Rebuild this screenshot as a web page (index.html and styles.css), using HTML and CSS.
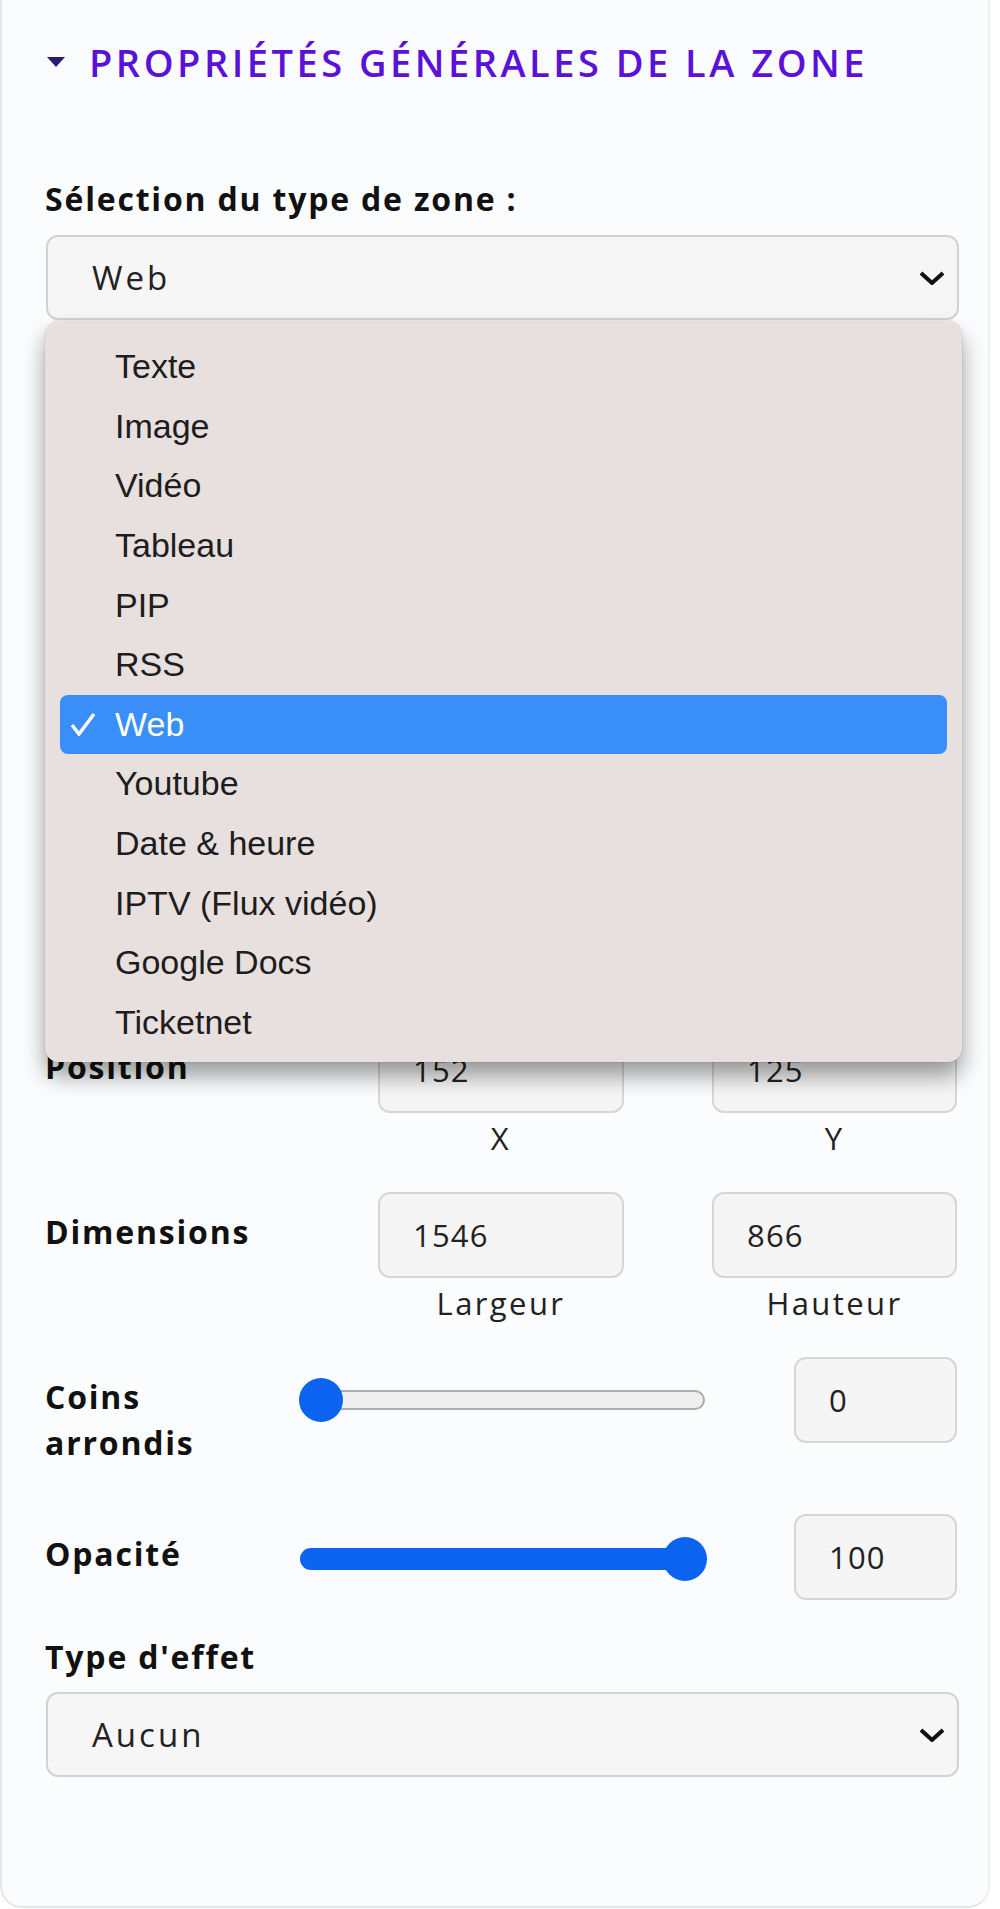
FILE: index.html
```html
<!DOCTYPE html>
<html lang="fr">
<head>
  <meta charset="UTF-8">
  <meta name="viewport" content="width=device-width, initial-scale=1.0">
  <title>Propriétés de la zone</title>
  <link rel="stylesheet" href="styles.css">
</head>
<body>
  <div class="panel">
    <div class="section-title">
      <svg class="caret" width="18" height="10" viewBox="0 0 18 10"><polygon points="0,0 18,0 9,10" fill="#2c1a70"/></svg>
      <span>PROPRIÉTÉS GÉNÉRALES DE LA ZONE</span>
    </div>

    <div class="field first">
      <div class="field-label">Sélection du type de zone :</div>
      <div class="select-wrap">
        <div class="select">
          <span>Web</span>
          <svg class="chevron" width="26" height="14" viewBox="0 0 26 14"><path d="M2 2 L13 12 L24 2" fill="none" stroke="#111" stroke-width="4"/></svg>
        </div>
        <ul class="dropdown">
          <li><span class="check"></span>Texte</li>
          <li><span class="check"></span>Image</li>
          <li><span class="check"></span>Vidéo</li>
          <li><span class="check"></span>Tableau</li>
          <li><span class="check"></span>PIP</li>
          <li><span class="check"></span>RSS</li>
          <li class="selected"><span class="check"><svg width="26" height="24" viewBox="0 0 26 24"><path d="M2 13 L9 22 L24 2" fill="none" stroke="#fff" stroke-width="3.5"/></svg></span>Web</li>
          <li><span class="check"></span>Youtube</li>
          <li><span class="check"></span>Date &amp; heure</li>
          <li><span class="check"></span>IPTV (Flux vidéo)</li>
          <li><span class="check"></span>Google Docs</li>
          <li><span class="check"></span>Ticketnet</li>
        </ul>
      </div>
    </div>

    <!-- espace des champs recouverts par la liste ouverte -->
    <div class="covered"></div>

    <div class="pair-row">
      <div class="row-label">Position</div>
      <div class="cell"><div class="input">152</div><div class="caption">X</div></div>
      <div class="cell"><div class="input">125</div><div class="caption">Y</div></div>
    </div>
    <div class="pair-row">
      <div class="row-label">Dimensions</div>
      <div class="cell"><div class="input">1546</div><div class="caption">Largeur</div></div>
      <div class="cell"><div class="input">866</div><div class="caption">Hauteur</div></div>
    </div>

    <div class="slider-row">
      <div class="row-label">Coins<br>arrondis</div>
      <div class="range">
        <div class="range-fill" style="width: 0%"></div>
        <div class="range-thumb" style="left: 0%"></div>
      </div>
      <div class="input small">0</div>
    </div>
    <div class="slider-row">
      <div class="row-label">Opacité</div>
      <div class="range filled">
        <div class="range-fill" style="width: 100%"></div>
        <div class="range-thumb" style="left: 100%"></div>
      </div>
      <div class="input small">100</div>
    </div>

    <div class="field effect">
      <div class="field-label">Type d'effet</div>
      <div class="select">
        <span>Aucun</span>
        <svg class="chevron" width="26" height="14" viewBox="0 0 26 14"><path d="M2 2 L13 12 L24 2" fill="none" stroke="#111" stroke-width="4"/></svg>
      </div>
    </div>
  </div>
</body>
</html>
```

FILE: styles.css
```css
body {
  margin: 0;
  background: #ffffff;
  font-family: 'Open Sans', 'Liberation Sans', sans-serif;
  color: #151515;
}
.panel {
  width: 990px;
  box-sizing: border-box;
  background: #fafcfd;
  border: 2px solid #e4e6e8;
  border-right-color: #eef0f2;
  border-top: none;
  border-radius: 0 0 22px 22px;
  padding: 41px 29px 129px 43px;
}
.section-title {
  display: flex;
  align-items: center;
  height: 42px;
  font-size: 38px;
  font-weight: 600;
  letter-spacing: 3.5px;
  color: #5a12d8;
  white-space: nowrap;
}
.caret {
  margin-right: 24px;
  margin-left: 2px;
}
.field {
  margin-top: 64px;
}
.field.first {
  margin-top: 98px;
}
.covered {
  height: 612px;
}
.field-label,
.row-label {
  font-size: 32px;
  font-weight: 700;
  line-height: 46px;
  letter-spacing: 1.8px;
  color: #111;
}
.field-label {
  margin-bottom: 18px;
  line-height: 36px;
}
.select-wrap {
  position: relative;
}
.select {
  height: 85px;
  box-sizing: border-box;
  display: flex;
  align-items: center;
  justify-content: space-between;
  padding: 0 12px 0 44px;
  background: #f7f6f6;
  border: 2px solid #d2d2d2;
  border-radius: 12px;
  font-size: 33px;
  letter-spacing: 3px;
  color: #222;
  margin-left: 1px;
}
.input {
  height: 86px;
  box-sizing: border-box;
  display: flex;
  align-items: center;
  padding-left: 33px;
  background: #f6f5f5;
  border: 2px solid #d6d6d6;
  border-radius: 12px;
  font-size: 31px;
  letter-spacing: 1.2px;
  color: #222;
}
.dropdown {
  position: absolute;
  top: 100%;
  left: 0;
  right: -3px;
  margin: 1px 0 0;
  padding: 16px 15px 10px;
  list-style: none;
  background: #e8e0df;
  border-radius: 14px;
  box-shadow: 0 14px 22px rgba(0, 0, 0, 0.38), 0 0 0 1px rgba(0, 0, 0, 0.06);
  font-family: 'Liberation Sans', Arial, sans-serif;
  font-size: 34px;
  color: #1d1d1d;
  z-index: 10;
}
.dropdown li {
  display: flex;
  align-items: center;
  height: 59.6px;
  border-radius: 8px;
}
.dropdown .check {
  width: 55px;
  padding-left: 10px;
  box-sizing: border-box;
  display: flex;
  align-items: center;
}
.dropdown li.selected {
  background: #3a8ef8;
  color: #fff;
}
.pair-row {
  display: grid;
  grid-template-columns: 245px 246px 245px;
  column-gap: 88px;
  margin-top: 95px;
}
.pair-row + .pair-row {
  margin-top: 35px;
}
.row-label {
  padding-top: 17px;
}
.cell {
  display: flex;
  flex-direction: column;
}
.caption {
  margin-top: 6px;
  text-align: center;
  font-size: 31px;
  line-height: 38px;
  letter-spacing: 2.4px;
  color: #222;
}
.slider-row {
  display: grid;
  grid-template-columns: 166px 405px 163px;
  column-gap: 89px;
  margin-top: 35px;
}
.slider-row + .slider-row {
  margin-top: 48px;
}
.range {
  position: relative;
  height: 20px;
  margin-top: 33px;
  box-sizing: border-box;
  background: #efefef;
  border: 2px solid #adadad;
  border-radius: 10px;
}
.range.filled {
  height: 22px;
  border: none;
  margin-top: 34px;
}
.range-fill {
  height: 100%;
  background: #0b63f0;
  border-radius: 11px;
}
.range-thumb {
  position: absolute;
  top: 50%;
  width: 44px;
  height: 44px;
  margin-top: -22px;
  margin-left: -3px;
  border-radius: 50%;
  background: #0b63f0;
}
.range.filled .range-thumb {
  margin-left: -42px;
}
.effect {
  margin-top: 34px;
}
.effect .field-label {
  line-height: 46px;
  margin-bottom: 12px;
}
```
